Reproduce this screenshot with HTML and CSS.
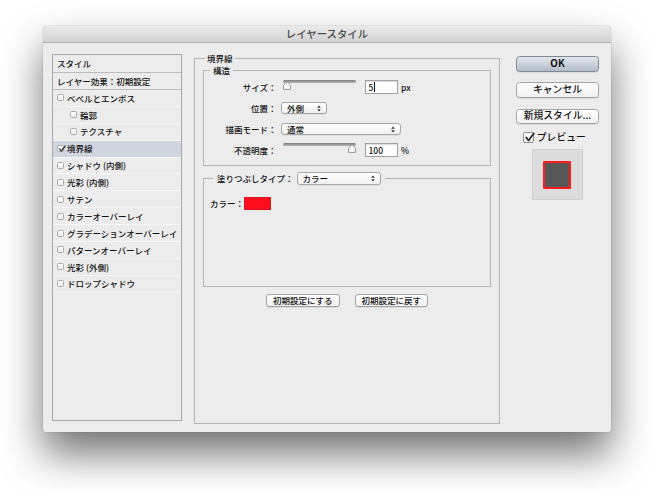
FILE: index.html
```html
<!DOCTYPE html>
<html lang="ja">
<head>
<meta charset="utf-8">
<title>レイヤースタイル</title>
<link rel="stylesheet" href="styles.css">
</head>
<body>
<div class="window">
  <div class="titlebar">レイヤースタイル</div>
  <div class="content">
    <div class="sidebar">
      <div class="side-head">スタイル</div>
      <div class="side-head">レイヤー効果：初期設定</div>
      <ul class="effects">
        <li class="effect"><span class="cb"></span>ベベルとエンボス</li>
        <li class="effect sub"><span class="cb"></span>輪郭</li>
        <li class="effect sub"><span class="cb"></span>テクスチャ</li>
        <li class="effect active"><span class="cb checked"><svg class="check" viewBox="0 0 8 8" width="8" height="8"><path d="M1.6 3.9 L3.3 6.1 L7.2 0.9" fill="none" stroke="#2a2a2a" stroke-width="1.2" stroke-linecap="round" stroke-linejoin="round"/></svg></span>境界線</li>
        <li class="effect"><span class="cb"></span>シャドウ (内側)</li>
        <li class="effect"><span class="cb"></span>光彩 (内側)</li>
        <li class="effect"><span class="cb"></span>サテン</li>
        <li class="effect"><span class="cb"></span>カラーオーバーレイ</li>
        <li class="effect"><span class="cb"></span>グラデーションオーバーレイ</li>
        <li class="effect"><span class="cb"></span>パターンオーバーレイ</li>
        <li class="effect"><span class="cb"></span>光彩 (外側)</li>
        <li class="effect"><span class="cb"></span>ドロップシャドウ</li>
      </ul>
    </div>

    <fieldset class="stroke-panel">
      <legend class="outer-legend">境界線</legend>
      <fieldset class="structure">
        <legend class="inner-legend">構造</legend>
        <div class="row">
          <span class="label">サイズ：</span>
          <div class="slider">
            <div class="track"></div>
            <svg class="thumb thumb-left" viewBox="0 0 8 9" width="8" height="9"><path d="M0.6 8.4 V4.2 L4 0.8 L7.4 4.2 V8.4 Z" fill="#fbfbfb" stroke="#8c8c8c" stroke-width="0.9" stroke-linejoin="round"/></svg>
          </div>
          <div class="num">5<span class="caret"></span></div>
          <span class="unit">px</span>
        </div>
        <div class="row">
          <span class="label">位置：</span>
          <div class="select select-sm"><span>外側</span><svg viewBox="0 0 4 7" width="4" height="7"><path d="M2 0.4 L3.8 2.8 H0.2 Z M2 6.6 L3.8 4.2 H0.2 Z" fill="#333"/></svg></div>
        </div>
        <div class="row">
          <span class="label">描画モード：</span>
          <div class="select select-lg"><span>通常</span><svg viewBox="0 0 4 7" width="4" height="7"><path d="M2 0.4 L3.8 2.8 H0.2 Z M2 6.6 L3.8 4.2 H0.2 Z" fill="#333"/></svg></div>
        </div>
        <div class="row">
          <span class="label">不透明度：</span>
          <div class="slider">
            <div class="track"></div>
            <svg class="thumb thumb-right" viewBox="0 0 8 9" width="8" height="9"><path d="M0.6 8.4 V4.2 L4 0.8 L7.4 4.2 V8.4 Z" fill="#fbfbfb" stroke="#8c8c8c" stroke-width="0.9" stroke-linejoin="round"/></svg>
          </div>
          <div class="num">100</div>
          <span class="unit">%</span>
        </div>
      </fieldset>

      <fieldset class="fill">
        <legend class="fill-legend"><span>塗りつぶしタイプ：</span><span class="select select-md"><span>カラー</span><svg viewBox="0 0 4 7" width="4" height="7"><path d="M2 0.4 L3.8 2.8 H0.2 Z M2 6.6 L3.8 4.2 H0.2 Z" fill="#333"/></svg></span></legend>
        <div class="fill-body">
          <div class="color-row"><span>カラー：</span><span class="swatch"></span></div>
        </div>
      </fieldset>

      <div class="defaults">
        <button class="btn btn-sm">初期設定にする</button>
        <button class="btn btn-sm">初期設定に戻す</button>
      </div>
    </fieldset>

    <div class="actions">
      <button class="btn btn-default">OK</button>
      <button class="btn">キャンセル</button>
      <button class="btn">新規スタイル...</button>
      <label class="preview-check"><span class="cb cb-lg"><svg class="check-lg" viewBox="0 0 11 11" width="11" height="11"><path d="M2.2 5.4 L4.5 8.4 L9.8 1.4" fill="none" stroke="#1e1e1e" stroke-width="1.7" stroke-linecap="round" stroke-linejoin="round"/></svg></span>プレビュー</label>
      <div class="preview-box"><div class="preview-swatch"></div></div>
    </div>
  </div>
</div>
</body>
</html>
```

FILE: styles.css
```css
html {
  background: #ffffff;
}

body {
  margin: 0;
  padding: 26px 0 0 43px;
  min-height: 492px;
  box-sizing: border-box;
  background: #ffffff;
  font-family: "Noto Sans CJK JP", "Noto Sans", sans-serif;
  font-weight: 500;
  color: #111111;
}

.window {
  width: 568px;
  height: 406px;
  background: #ececec;
  border-radius: 4px 4px 2px 2px;
  box-shadow: 0 22px 40px rgba(0, 0, 0, 0.55), 0 0 1px rgba(0, 0, 0, 0.55);
  display: flex;
  flex-direction: column;
  overflow: hidden;
}

.titlebar {
  flex: none;
  height: 17px;
  box-sizing: border-box;
  background: linear-gradient(#eaeaea, #d2d2d2);
  border-bottom: 1px solid #b3b3b3;
  text-align: center;
  font-size: 10.4px;
  line-height: 16px;
  color: #4a4a4a;
}

.content {
  flex: 1;
  display: flex;
  align-items: flex-start;
  padding: 9px 12px 0 9px;
}

/* ---------- sidebar ---------- */
.sidebar {
  flex: none;
  width: 130px;
  height: 367px;
  margin-top: 2px;
  margin-right: 12px;
  box-sizing: border-box;
  border: 1px solid #a9a9a9;
  background: #ececec;
  font-size: 8.5px;
}

.side-head {
  height: 17.5px;
  box-sizing: border-box;
  border-bottom: 1px solid #bcbcbc;
  padding-left: 4px;
  display: flex;
  align-items: center;
  line-height: 1;
}

.effects {
  list-style: none;
  margin: 0;
  padding: 0;
}

.effect {
  height: 16.9px;
  box-sizing: border-box;
  border-bottom: 1px solid #f7f7f7;
  padding-left: 4px;
  display: flex;
  align-items: center;
  line-height: 1;
  white-space: nowrap;
}

.effect.sub {
  padding-left: 17px;
}

.effect.active {
  background: #cfd6e0;
}

.cb {
  flex: none;
  position: relative;
  width: 7px;
  height: 7px;
  box-sizing: border-box;
  border: 1px solid #aaaaaa;
  border-radius: 1.5px;
  background: linear-gradient(#ffffff, #ececec);
  margin-right: 3px;
}

.check {
  position: absolute;
  left: -0.5px;
  top: -1.5px;
}

/* ---------- middle panel ---------- */
fieldset {
  margin: 0;
  min-width: 0;
  border: 1px solid #b4b4b4;
}

legend {
  font-size: 8.5px;
  line-height: 12px;
}

.stroke-panel {
  flex: none;
  width: 306px;
  height: 372px;
  box-sizing: border-box;
  padding: 0 8px;
  font-size: 8.5px;
}

.outer-legend {
  margin-left: 2px;
  padding: 0 2px;
}

.structure {
  padding: 0.5px 6px 4px;
}

.inner-legend {
  padding: 0 3px;
}

.row {
  height: 21px;
  display: flex;
  align-items: center;
  line-height: 1;
}

.label {
  flex: none;
  width: 66.5px;
  text-align: right;
  white-space: nowrap;
}

.slider {
  flex: none;
  position: relative;
  align-self: flex-start;
  width: 73px;
  height: 9px;
  margin-top: 3.5px;
  margin-left: 6.5px;
}

.track {
  height: 3px;
  border-radius: 1.5px;
  background: linear-gradient(#7b7b7b, #b9b9b9);
}

.thumb {
  position: absolute;
  top: 0.5px;
}

.thumb-left {
  left: 0;
}

.thumb-right {
  right: 0;
}

.num {
  flex: none;
  width: 33px;
  height: 14px;
  box-sizing: border-box;
  margin-left: 9px;
  padding-left: 2.5px;
  border: 1px solid #a1a1a1;
  background: #ffffff;
  box-shadow: inset 0 1px 1px rgba(0, 0, 0, 0.15);
  display: flex;
  align-items: center;
  font-size: 8.5px;
}

.caret {
  width: 1px;
  height: 10px;
  background: #111;
  margin-left: 0.5px;
}

.unit {
  margin-left: 3px;
}

.select {
  flex: none;
  height: 12px;
  box-sizing: border-box;
  border: 1px solid #a6a6a6;
  border-radius: 3px;
  background: linear-gradient(#ffffff, #f0f0f0);
  box-shadow: 0 0.5px 0 rgba(0, 0, 0, 0.1);
  padding: 0 5px 0 5px;
  display: flex;
  align-items: center;
  justify-content: space-between;
  line-height: 1;
}

.select-sm {
  width: 46px;
  margin-left: 4.5px;
}

.select-lg {
  width: 120px;
  margin-left: 4.5px;
}

.select-md {
  width: 84.5px;
  height: 12.6px;
  margin-left: 3px;
}

.fill {
  margin-top: 6.5px;
  padding: 0 6px;
}

.fill-legend {
  margin-left: 3px;
  padding: 0 4px;
  display: flex;
  align-items: center;
  height: 13px;
  line-height: 1;
}

.fill-body {
  height: 100.5px;
  box-sizing: border-box;
  padding-top: 11.5px;
}

.color-row {
  display: flex;
  align-items: center;
  line-height: 1;
}

.swatch {
  width: 27px;
  height: 13.5px;
  box-sizing: border-box;
  background: #ff0f1e;
  border: 1px solid #d21823;
}

.defaults {
  margin-top: 7px;
  display: flex;
  justify-content: center;
  gap: 15px;
}

/* ---------- buttons ---------- */
.btn {
  font-family: inherit;
  font-weight: 500;
  color: #111;
  margin: 0;
  padding: 0;
  height: 15.5px;
  box-sizing: border-box;
  border: 1px solid #a3a3a3;
  border-radius: 3.5px;
  background: linear-gradient(#ffffff, #f0f0f0);
  box-shadow: 0 1px 0 rgba(0, 0, 0, 0.07);
  display: flex;
  align-items: center;
  justify-content: center;
  line-height: 1;
  white-space: nowrap;
  font-size: 9.8px;
}

.btn-sm {
  height: 13.5px;
  width: 73.5px;
  font-size: 8.5px;
  border-radius: 3px;
}

.btn-default {
  background: linear-gradient(#e2e7ed, #b3bdc9);
  border-color: #7f8894;
  font-weight: 700;
}

/* ---------- right column ---------- */
.actions {
  flex: none;
  width: 83px;
  margin-left: 16px;
  padding-top: 4px;
  display: flex;
  flex-direction: column;
  font-size: 9.8px;
}

.actions .btn + .btn {
  margin-top: 10.8px;
}

.preview-check {
  margin-top: 8px;
  margin-left: 7.3px;
  height: 10.7px;
  display: flex;
  align-items: center;
  line-height: 1;
  white-space: nowrap;
}

.cb-lg {
  width: 10.5px;
  height: 10.5px;
  border-color: #8d8d8d;
  border-radius: 2px;
  margin-right: 3px;
}

.check-lg {
  position: absolute;
  left: -0.5px;
  top: -1.5px;
}

.preview-box {
  margin-top: 6.7px;
  margin-left: 15.7px;
  width: 51px;
  height: 51px;
  box-sizing: border-box;
  border: 1px solid #d0d0d0;
  background: #dcdcdc;
  display: flex;
  align-items: center;
  justify-content: center;
}

.preview-swatch {
  width: 27.5px;
  height: 27.5px;
  box-sizing: border-box;
  border: 2px solid #ff1b1b;
  border-radius: 1px;
  background: #565656;
}
```
